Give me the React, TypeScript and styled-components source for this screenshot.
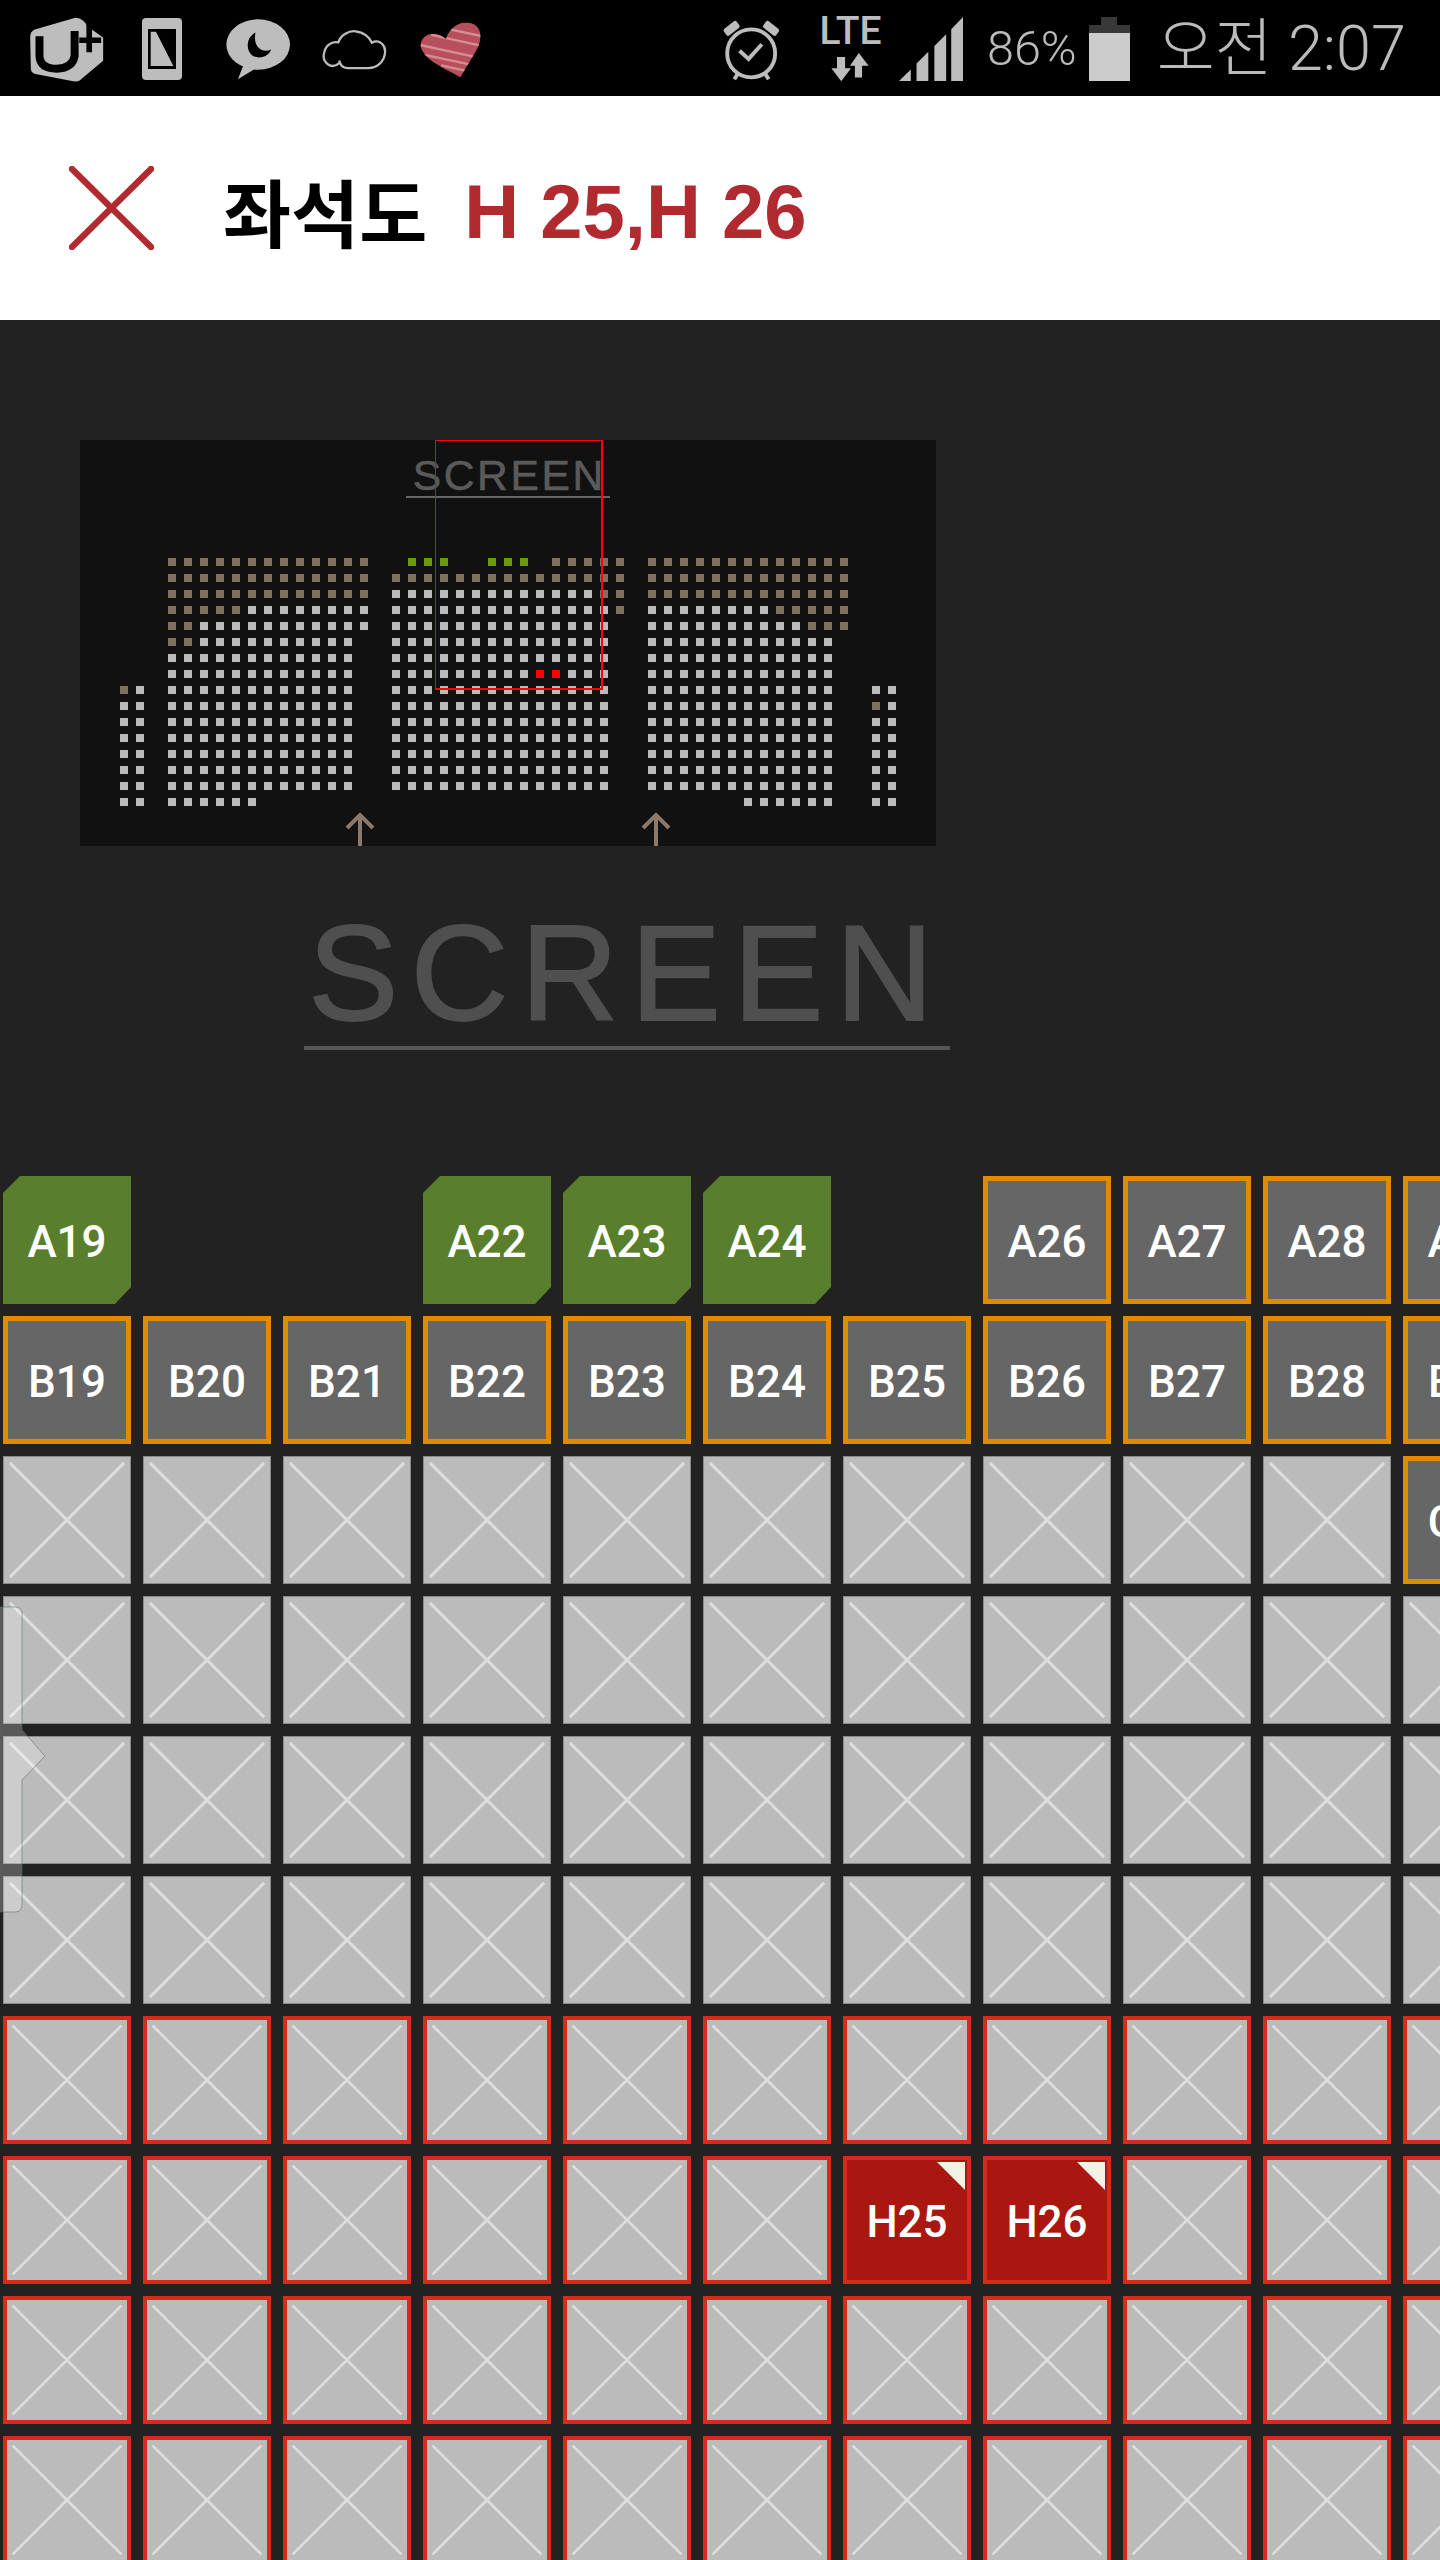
import styled, { createGlobalStyle } from 'styled-components';

const GlobalStyle = createGlobalStyle`
  html, body {
    margin: 0;
    background: #222222;
  }
`;

type DotKind = '.' | 'g' | 'b' | 'n' | 'r';
type SeatKind = 'empty' | 'green' | 'orange' | 'blocked' | 'warned' | 'selected';

const g = (n: number) => 'g'.repeat(n);
const b = (n: number) => 'b'.repeat(n);
const e = (n: number) => '.'.repeat(n);

// 미니맵: 왼쪽 | 블록1 | 중앙 | 블록3 | 오른쪽
const miniRows = [
  [e(2), b(13), '.nnn..nnn.bbbbb', b(13), e(2)],
  [e(2), b(13), b(15), b(13), e(2)],
  [e(2), b(13), g(13) + b(2), b(13), e(2)],
  [e(2), b(5) + g(8), g(14) + b(1), g(8) + b(5), e(2)],
  [e(2), b(2) + g(11), g(14) + e(1), g(10) + b(3), e(2)],
  [e(2), b(2) + g(10) + e(1), g(14) + e(1), g(12) + e(1), e(2)],
  [e(2), g(12) + e(1), g(14) + e(1), g(12) + e(1), e(2)],
  [e(2), g(12) + e(1), g(9) + 'rr' + g(3) + e(1), g(12) + e(1), e(2)],
  ['bg', g(12) + e(1), g(14) + e(1), g(12) + e(1), 'gg'],
  ['gg', g(12) + e(1), g(14) + e(1), g(12) + e(1), 'bg'],
  ['gg', g(12) + e(1), g(14) + e(1), g(12) + e(1), 'gg'],
  ['gg', g(12) + e(1), g(14) + e(1), g(12) + e(1), 'gg'],
  ['gg', g(12) + e(1), g(14) + e(1), g(12) + e(1), 'gg'],
  ['gg', g(12) + e(1), g(14) + e(1), g(12) + e(1), 'gg'],
  ['gg', g(12) + e(1), g(14) + e(1), g(12) + e(1), 'gg'],
  ['gg', g(6) + e(7), e(15), e(6) + g(6) + e(1), 'gg'],
];

const miniDots = miniRows.flatMap((r) => r.join('.').split('') as DotKind[]);

const seatRows = ['A', 'B', 'C', 'D', 'E', 'F', 'G', 'H', 'I', 'J'];
const seatCols = Array.from({ length: 11 }, (_, i) => i);

function seatKind(row: string, col: number): SeatKind {
  if (row === 'A') {
    if ([1, 2, 6].includes(col)) return 'empty';
    return col < 6 ? 'green' : 'orange';
  }
  if (row === 'B') return 'orange';
  if (row === 'C') return col === 10 ? 'orange' : 'blocked';
  if (row === 'D' || row === 'E' || row === 'F') return 'blocked';
  if (row === 'H' && (col === 6 || col === 7)) return 'selected';
  return 'warned';
}

function CrossMark() {
  return (
    <SeatCross viewBox="0 0 128 128">
      <path d="M6 6 L122 122 M122 6 L6 122" stroke="#dedede" strokeWidth="3" fill="none" />
    </SeatCross>
  );
}

function UplusIcon() {
  return (
    <Glyph viewBox="90 50 222 196" width="74" height="65">
      <path d="M104 88 L226 52 Q250 52 262 78 L310 112 V182 L238 242 Q228 246 216 243 L106 222 Q92 218 92 206 L90 110 Q90 94 104 88 Z" fill="#bdbdbd" />
      <path d="M118 108 V168 Q120 206 170 206 Q218 204 224 168 V92" stroke="#000" strokeWidth="24" fill="none" />
      <path d="M268 72 V156 M238 120 H304" stroke="#000" strokeWidth="17" fill="none" />
    </Glyph>
  );
}

function PhoneIcon() {
  return (
    <Glyph $ml={38} viewBox="426 54 120 186" width="40" height="62">
      <rect x="426" y="54" width="120" height="186" rx="12" fill="#bdbdbd" />
      <rect x="444" y="87" width="84" height="120" fill="#000" />
      <path d="M452 95 H468 L520 198 H452 Z" fill="#bdbdbd" />
    </Glyph>
  );
}

function BubbleIcon() {
  return (
    <Glyph $ml={44} viewBox="676 56 196 184" width="65" height="61">
      <ellipse cx="773" cy="133" rx="96" ry="76" fill="#bdbdbd" />
      <path d="M728 196 L712 238 L765 205 Z" fill="#bdbdbd" />
      <path d="M765 97 C730 115 735 170 775 172 C795 172 808 160 812 148 C790 160 755 145 765 97 Z" fill="#000" />
    </Glyph>
  );
}

function CloudIcon() {
  return (
    <Glyph $ml={31} viewBox="962 84 200 124" width="65" height="41">
      <path
        d="M1015 188 C990 210 962 185 968 158 C972 135 990 120 1012 124 C1020 100 1045 88 1065 90 C1090 92 1108 108 1115 125 C1140 112 1158 135 1156 155 C1154 185 1130 203 1105 203 L1040 203 C1028 203 1018 195 1015 180"
        stroke="#bdbdbd"
        strokeWidth="7"
        fill="none"
      />
    </Glyph>
  );
}

function HeartIcon() {
  return (
    <Glyph $ml={33} viewBox="1256 58 188 172" width="62" height="57">
      <defs>
        <clipPath id="heart-shape">
          <path d="M1378 228 C1340 205 1270 180 1258 135 C1255 100 1300 80 1335 112 C1345 75 1385 50 1420 68 C1450 85 1440 125 1425 150 Z" />
        </clipPath>
      </defs>
      <g clipPath="url(#heart-shape)">
        <rect x="1250" y="50" width="200" height="185" fill="#b84f5c" />
        <path
          d="M1350 84 L1445 104 M1290 100 L1440 132 M1255 130 L1430 168 M1270 160 L1420 192 M1320 192 L1410 212"
          stroke="#d58f94"
          strokeWidth="7"
          fill="none"
        />
      </g>
    </Glyph>
  );
}

function AlarmIcon() {
  return (
    <Glyph viewBox="70 50 182 192" width="59" height="63">
      <circle cx="160" cy="158" r="74" stroke="#bdbdbd" strokeWidth="12" fill="none" />
      <rect x="74" y="68" width="50" height="26" rx="7" transform="rotate(-38 99 80)" fill="#bdbdbd" />
      <rect x="197" y="68" width="50" height="26" rx="7" transform="rotate(38 222 80)" fill="#bdbdbd" />
      <path d="M124 150 L152 175 L193 130" stroke="#bdbdbd" strokeWidth="12" fill="none" />
      <path d="M118 222 L108 238 M204 222 L214 238" stroke="#bdbdbd" strokeWidth="12" fill="none" />
    </Glyph>
  );
}

function SignalIcon() {
  return (
    <Glyph $ml={16} viewBox="605 52 190 190" width="64" height="64">
      <path
        d="M605 242 L640 208 V242 Z M657 242 V190 L692 155 V242 Z M710 242 V138 L745 103 V242 Z M760 242 V88 L795 52 V242 Z"
        fill="#bdbdbd"
      />
    </Glyph>
  );
}

function BatteryIcon() {
  return (
    <Glyph $ml={12} viewBox="0 0 41 64" width="41" height="64">
      <rect x="12" y="0" width="16" height="8" fill="#383838" />
      <rect x="0" y="8" width="41" height="8" fill="#383838" />
      <rect x="0" y="16" width="41" height="48" fill="#cccccc" />
    </Glyph>
  );
}

export default function App() {
  return (
    <Page>
      <GlobalStyle />
      <StatusBar>
        <StatusGroup>
          <UplusIcon />
          <PhoneIcon />
          <BubbleIcon />
          <CloudIcon />
          <HeartIcon />
        </StatusGroup>
        <StatusGroup>
          <AlarmIcon />
          <LteStack>
            <LteLabel>LTE</LteLabel>
            <svg viewBox="405 160 120 92" width="40" height="30">
              <path
                d="M425 175 H450 V210 H468 L438 250 L408 210 H425 Z M480 238 H502 V202 H522 L492 163 L465 202 H480 Z"
                fill="#bdbdbd"
              />
            </svg>
          </LteStack>
          <SignalIcon />
          <BatteryText>86%</BatteryText>
          <BatteryIcon />
          <Clock>오전 2:07</Clock>
        </StatusGroup>
      </StatusBar>

      <Header>
        <svg viewBox="0 0 85 84" width="85" height="84">
          <path d="M3 3 L82 81 M82 3 L3 81" stroke="#b02a30" strokeWidth="6.5" strokeLinecap="round" fill="none" />
        </svg>
        <Title>좌석도</Title>
        <PickedSeats>H 25,H 26</PickedSeats>
      </Header>

      <Stage>
        <MiniMap>
          <MiniScreen>SCREEN</MiniScreen>
          <MiniGrid>
            {miniDots.map((kind, i) => (
              <MiniDot key={i} $kind={kind} />
            ))}
          </MiniGrid>
          <MiniArrow $left={264} viewBox="0 0 32 34" width="32" height="34">
            <path d="M16 2 V40 M3 16 L16 3 L29 16" stroke="#8b7868" strokeWidth="4" fill="none" />
          </MiniArrow>
          <MiniArrow $left={560} viewBox="0 0 32 34" width="32" height="34">
            <path d="M16 2 V40 M3 16 L16 3 L29 16" stroke="#8b7868" strokeWidth="4" fill="none" />
          </MiniArrow>
          <ViewFrame />
        </MiniMap>

        <BigScreen>SCREEN</BigScreen>

        <SeatGrid>
          {seatRows.map((row) =>
            seatCols.map((col) => {
              const kind = seatKind(row, col);
              const crossed = kind === 'blocked' || kind === 'warned';
              return (
                <Seat key={row + col} $kind={kind}>
                  {crossed && <CrossMark />}
                  {!crossed && kind !== 'empty' && `${row}${col + 19}`}
                  {kind === 'selected' && <SeatFlag />}
                </Seat>
              );
            }),
          )}
        </SeatGrid>

        <SideHandle viewBox="0 0 48 308" width="48" height="308">
          <path
            d="M0 1 H15 Q22 1 22 8 V124 L45 150 L22 174 V299 Q22 306 15 306 H0 Z"
            fill="rgba(255,255,255,0.25)"
            stroke="rgba(90,105,105,0.55)"
            strokeWidth="1"
          />
        </SideHandle>
      </Stage>
    </Page>
  );
}

const Page = styled.div`
  width: 1440px;
  height: 2560px;
  overflow: hidden;
  background: #222222;
`;

const StatusBar = styled.div`
  display: flex;
  justify-content: space-between;
  align-items: center;
  box-sizing: border-box;
  height: 96px;
  padding: 2px 34px 0 30px;
  background: #000000;
`;

const StatusGroup = styled.div`
  display: flex;
  align-items: center;
`;

const Glyph = styled.svg<{ $ml?: number }>`
  display: block;
  flex: none;
  margin-left: ${(p) => p.$ml ?? 0}px;
`;

const LteStack = styled.div`
  display: flex;
  flex-direction: column;
  align-items: center;
  width: 65px;
  margin-left: 37px;
`;

const LteLabel = styled.span`
  margin-bottom: 6px;
  font: 500 39px/30px Roboto, sans-serif;
  color: #bdbdbd;
`;

const BatteryText = styled.span`
  margin-left: 24px;
  font: 300 48.5px/64px Roboto, sans-serif;
  color: #bbbbbb;
`;

const Clock = styled.span`
  margin-left: 27px;
  font: 300 63px/70px Roboto, 'Noto Sans CJK KR', sans-serif;
  color: #bbbbbb;
  white-space: nowrap;
`;

const Header = styled.header`
  display: flex;
  align-items: center;
  box-sizing: border-box;
  height: 224px;
  padding-left: 69px;
  background: #ffffff;
  font-family: 'Liberation Sans', 'Noto Sans CJK KR', sans-serif;
  font-weight: 700;
`;

const Title = styled.span`
  margin: 2px 0 0 69px;
  font-size: 74px;
  color: #000000;
`;

const PickedSeats = styled.span`
  margin: 6px 0 0 37px;
  font-size: 76px;
  color: #b02a30;
`;

const Stage = styled.main`
  position: relative;
  height: 2240px;
  padding-top: 120px;
  box-sizing: border-box;
`;

const MiniMap = styled.div`
  position: relative;
  width: 856px;
  height: 406px;
  margin-left: 80px;
  overflow: hidden;
  background: #111111;
`;

const MiniScreen = styled.div`
  box-sizing: border-box;
  width: 204px;
  height: 58px;
  margin-left: 326px;
  padding-top: 14px;
  border-bottom: 2px solid #666666;
  font: 400 42.6px/42px 'Liberation Sans', sans-serif;
  letter-spacing: 2.6px;
  text-indent: 2.6px;
  text-align: center;
  color: #5a5a5a;
  -webkit-text-stroke: 0.6px #5a5a5a;
`;

const MiniGrid = styled.div`
  display: grid;
  grid-template-columns: repeat(49, 8px);
  grid-auto-rows: 8px;
  gap: 8px;
  margin: 60px 0 0 40px;
`;

const dotColors: Record<DotKind, string> = {
  '.': 'transparent',
  g: '#bbbbbb',
  b: '#80705e',
  n: '#6a9a08',
  r: '#ff0000',
};

const MiniDot = styled.i<{ $kind: DotKind }>`
  display: block;
  background: ${(p) => dotColors[p.$kind]};
`;

const MiniArrow = styled.svg<{ $left: number }>`
  position: absolute;
  bottom: 0;
  left: ${(p) => p.$left}px;
`;

const ViewFrame = styled.div`
  position: absolute;
  top: 0;
  left: 355px;
  box-sizing: border-box;
  width: 168px;
  height: 250px;
  border: 1px solid #ff0000;
  border-width: 1px 2px 2px 1px;
`;

const BigScreen = styled.div`
  box-sizing: border-box;
  width: 646px;
  height: 144px;
  margin: 60px 0 126px 304px;
  border-bottom: 4px solid #555555;
  font: 400 135px/135px 'Liberation Sans', sans-serif;
  letter-spacing: 12.5px;
  text-align: center;
  white-space: nowrap;
  color: #4f4f4f;
  -webkit-text-stroke: 2px #4f4f4f;
`;

const SeatGrid = styled.div`
  display: grid;
  grid-template-columns: repeat(11, 128px);
  grid-auto-rows: 128px;
  gap: 12px;
  padding-left: 3px;
`;

const seatSkins: Record<SeatKind, string> = {
  empty: 'background: transparent;',
  green: `
    background: #5a7f2c;
    clip-path: polygon(17px 0, 100% 0, 100% calc(100% - 17px), calc(100% - 16px) 100%, 0 100%, 0 17px);
  `,
  orange: 'background: #666666; border: 5px solid #e08a00;',
  blocked: 'background: #bbbbbb; border: 1px solid #8a8a8a;',
  warned: 'background: #bbbbbb; border: 4px solid #d9291c;',
  selected: 'background: #a91710; border: 4px solid #d9291c;',
};

const Seat = styled.div<{ $kind: SeatKind }>`
  position: relative;
  display: flex;
  align-items: center;
  justify-content: center;
  box-sizing: border-box;
  padding-top: 3px;
  font: 500 44px/1 Roboto, sans-serif;
  color: #ffffff;
  white-space: nowrap;
  ${(p) => seatSkins[p.$kind]}
`;

const SeatCross = styled.svg`
  position: absolute;
  top: 0;
  left: 0;
  width: 100%;
  height: 100%;
`;

const SeatFlag = styled.span`
  position: absolute;
  top: 2px;
  right: 2px;
  width: 28px;
  height: 28px;
  background: #f3f0e4;
  clip-path: polygon(0 0, 100% 0, 100% 100%);
`;

const SideHandle = styled.svg`
  position: absolute;
  top: 1286px;
  left: 0;
`;
